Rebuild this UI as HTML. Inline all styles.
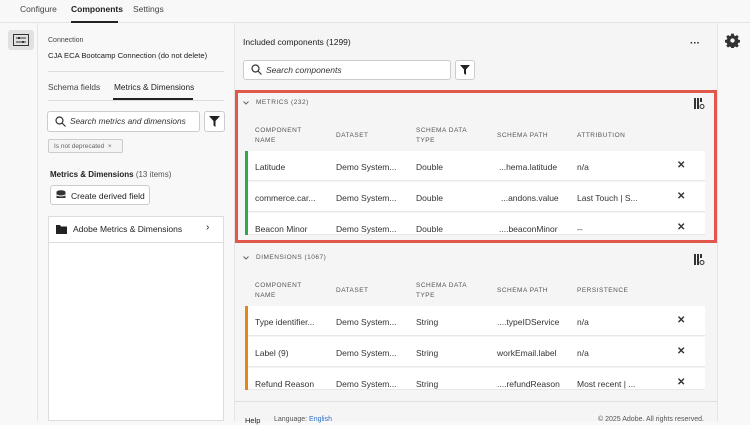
<!DOCTYPE html>
<html><head><meta charset="utf-8"><style>
*{box-sizing:border-box;margin:0;padding:0}
body{width:750px;height:421px;overflow:hidden;background:#f8f8f8;font-family:"Liberation Sans",sans-serif;color:#222;position:relative;font-size:9px}
.a{position:absolute}
.hdr{font-size:6.5px;color:#555;letter-spacing:.5px;line-height:10px}
.row{position:absolute;left:245px;width:460px;height:30px;background:#fff;border-bottom:1px solid #e8e8e8}
.row span{position:absolute;top:11px;font-size:8.5px;color:#333;white-space:nowrap}
.x{font-weight:bold;font-size:10px!important;top:9px!important}
</style></head><body>
<div class="a" style="left:0;top:0;width:750px;height:23px;background:#f8f8f8;border-bottom:1px solid #e4e4e4"></div>
<div class="a" style="left:20px;top:4px;font-size:8.5px;color:#444">Configure</div>
<div class="a" style="left:71px;top:4px;font-size:8.5px;font-weight:bold">Components</div>
<div class="a" style="left:71px;top:21px;width:47px;height:2px;background:#222"></div>
<div class="a" style="left:133px;top:4px;font-size:8.5px;color:#444">Settings</div>
<div class="a" style="left:8px;top:30px;width:26px;height:20px;background:#e1e1e1;border-radius:3px"></div>
<svg class="a" style="left:13px;top:34px" width="16" height="12"><rect x="0.5" y="0.5" width="15" height="11" fill="none" stroke="#333"/><line x1="3" y1="4" x2="13" y2="4" stroke="#333"/><line x1="3" y1="8" x2="13" y2="8" stroke="#333"/><rect x="5" y="3" width="2" height="2" fill="#333"/><rect x="9" y="7" width="2" height="2" fill="#333"/></svg>
<div class="a" style="left:37px;top:23px;width:1px;height:398px;background:#e4e4e4"></div>
<div class="a" style="left:234px;top:23px;width:1px;height:398px;background:#e4e4e4"></div>
<div class="a" style="left:48px;top:37px;font-size:7px;color:#444">Connection</div>
<div class="a" style="left:48px;top:51px;font-size:7.6px">CJA ECA Bootcamp Connection (do not delete)</div>
<div class="a" style="left:48px;top:71px;width:176px;height:1px;background:#ddd"></div>
<div class="a" style="left:48px;top:82px;font-size:8.3px;color:#444">Schema fields</div>
<div class="a" style="left:114px;top:82px;font-size:8.3px">Metrics &amp; Dimensions</div>
<div class="a" style="left:48px;top:100px;width:176px;height:1px;background:#ddd"></div>
<div class="a" style="left:113px;top:98px;width:80px;height:2px;background:#222"></div>
<div class="a" style="left:47px;top:111px;width:153px;height:21px;background:#fff;border:1px solid #ccc;border-radius:3px"></div>
<svg class="a" style="left:55px;top:116px" width="11" height="11"><circle cx="4.5" cy="4.5" r="3.5" fill="none" stroke="#333" stroke-width="1.2"/><line x1="7" y1="7" x2="10.5" y2="10.5" stroke="#333" stroke-width="1.2"/></svg>
<div class="a" style="left:70px;top:116px;font-size:8.3px;font-style:italic;color:#333">Search metrics and dimensions</div>
<div class="a" style="left:204px;top:111px;width:21px;height:21px;background:#fff;border:1px solid #ccc;border-radius:3px"></div>
<svg class="a" style="left:209px;top:116px" width="11" height="11"><path d="M0 0H11L6.5 5V11L4.5 9.5V5Z" fill="#222"/></svg>
<div class="a" style="left:48px;top:139px;width:75px;height:14px;border:1px solid #ccc;border-radius:2px;background:#f4f4f4;font-size:6.5px;color:#666;padding:3px 0 0 5px">Is not deprecated &nbsp;×</div>
<div class="a" style="left:50px;top:170px;font-size:8px;font-weight:bold">Metrics &amp; Dimensions <span style="font-weight:normal;color:#555">(13 items)</span></div>
<div class="a" style="left:50px;top:185px;width:100px;height:20px;background:#fff;border:1px solid #ccc;border-radius:3px;font-size:8.5px;padding:5px 0 0 20px">Create derived field</div>
<svg class="a" style="left:56px;top:190px" width="10" height="10"><ellipse cx="5" cy="2" rx="4.5" ry="1.8" fill="#333"/><rect x="0.5" y="2" width="9" height="6" fill="#333"/><path d="M0.5 5Q5 7 9.5 5" stroke="#fff" fill="none"/></svg>
<div class="a" style="left:48px;top:216px;width:176px;height:205px;background:#fff;border:1px solid #ddd"></div>
<div class="a" style="left:48px;top:242px;width:176px;height:1px;background:#ddd"></div>
<svg class="a" style="left:56px;top:225px" width="11" height="9"><path d="M0 0H4L5 1.5H11V9H0Z" fill="#222"/></svg>
<div class="a" style="left:73px;top:224px;font-size:8.5px">Adobe Metrics &amp; Dimensions</div>
<div class="a" style="left:206px;top:222px;font-size:10px">›</div>
<div class="a" style="left:235px;top:23px;width:482px;height:398px;background:#f5f5f5"></div>
<div class="a" style="left:717px;top:23px;width:1px;height:398px;background:#e4e4e4"></div>
<div class="a" style="left:243px;top:37px;font-size:8.5px">Included components (1299)</div>
<div class="a" style="left:690px;top:38px;font-size:10px;font-weight:bold">···</div>
<svg class="a" style="left:725px;top:33px" width="15" height="15" viewBox="0 0 24 24"><path fill="#333" d="M10 1h4l.6 3 2 .9 2.6-1.7 2.8 2.8-1.7 2.6.9 2 3 .6v4l-3 .6-.9 2 1.7 2.6-2.8 2.8-2.6-1.7-2 .9-.6 3h-4l-.6-3-2-.9-2.6 1.7-2.8-2.8 1.7-2.6-.9-2-3-.6v-4l3-.6.9-2-1.7-2.6 2.8-2.8 2.6 1.7 2-.9z"/><circle cx="12" cy="12" r="3.5" fill="#f8f8f8"/></svg>
<div class="a" style="left:243px;top:60px;width:208px;height:20px;background:#fff;border:1px solid #ccc;border-radius:3px"></div>
<svg class="a" style="left:251px;top:64px" width="11" height="11"><circle cx="4.5" cy="4.5" r="3.5" fill="none" stroke="#333" stroke-width="1.2"/><line x1="7" y1="7" x2="10.5" y2="10.5" stroke="#333" stroke-width="1.2"/></svg>
<div class="a" style="left:266px;top:65px;font-size:8.5px;font-style:italic;color:#333">Search components</div>
<div class="a" style="left:455px;top:60px;width:20px;height:20px;background:#fff;border:1px solid #ccc;border-radius:3px"></div>
<svg class="a" style="left:460px;top:65px" width="10" height="10"><path d="M0 0H10L6 4.5V10L4 8.5V4.5Z" fill="#222"/></svg>
<svg class="a" style="left:243px;top:101px" width="6" height="4"><path d="M0.5 0.5L3 3L5.5 0.5" fill="none" stroke="#666"/></svg>
<div class="a hdr" style="left:256px;top:98px;color:#555">METRICS (232)</div>
<svg class="a" style="left:694px;top:98px" width="11" height="12"><rect x="0" y="0" width="2" height="11" fill="#333"/><rect x="3" y="0" width="2" height="11" fill="#333"/><rect x="6" y="0" width="2" height="4" fill="#333"/><circle cx="8" cy="8.5" r="2" fill="none" stroke="#333"/></svg>
<div class="a hdr" style="left:255px;top:126px">COMPONENT<br>NAME</div>
<div class="a hdr" style="left:336px;top:131px">DATASET</div>
<div class="a hdr" style="left:416px;top:126px">SCHEMA DATA<br>TYPE</div>
<div class="a hdr" style="left:497px;top:131px">SCHEMA PATH</div>
<div class="a hdr" style="left:577px;top:131px">ATTRIBUTION</div>
<div class="row" style="top:151px"><span style="left:10px">Latitude</span><span style="left:91px">Demo System...</span><span style="left:171px">Double</span><span style="left:254px">...hema.latitude</span><span style="left:332px">n/a</span><span class="x" style="left:432px">✕</span></div>
<div class="row" style="top:182px"><span style="left:10px">commerce.car...</span><span style="left:91px">Demo System...</span><span style="left:171px">Double</span><span style="left:256px">...andons.value</span><span style="left:332px">Last Touch | S...</span><span class="x" style="left:432px">✕</span></div>
<div class="row" style="top:213px;height:22px"><span style="left:10px">Beacon Minor</span><span style="left:91px">Demo System...</span><span style="left:171px">Double</span><span style="left:254px">....beaconMinor</span><span style="left:332px">--</span><span class="x" style="left:432px">✕</span></div>
<div class="a" style="left:245px;top:151px;width:3px;height:84px;background:#2fa847"></div>
<div class="a" style="left:235px;top:90px;width:482px;height:153px;border:3px solid #e2574c"></div>
<svg class="a" style="left:243px;top:256px" width="6" height="4"><path d="M0.5 0.5L3 3L5.5 0.5" fill="none" stroke="#666"/></svg>
<div class="a hdr" style="left:256px;top:253px">DIMENSIONS (1067)</div>
<svg class="a" style="left:694px;top:254px" width="11" height="12"><rect x="0" y="0" width="2" height="11" fill="#333"/><rect x="3" y="0" width="2" height="11" fill="#333"/><rect x="6" y="0" width="2" height="4" fill="#333"/><circle cx="8" cy="8.5" r="2" fill="none" stroke="#333"/></svg>
<div class="a hdr" style="left:255px;top:281px">COMPONENT<br>NAME</div>
<div class="a hdr" style="left:336px;top:286px">DATASET</div>
<div class="a hdr" style="left:416px;top:281px">SCHEMA DATA<br>TYPE</div>
<div class="a hdr" style="left:497px;top:286px">SCHEMA PATH</div>
<div class="a hdr" style="left:577px;top:286px">PERSISTENCE</div>
<div class="row" style="top:306px"><span style="left:10px">Type identifier...</span><span style="left:91px">Demo System...</span><span style="left:171px">String</span><span style="left:252px">....typeIDService</span><span style="left:332px">n/a</span><span class="x" style="left:432px">✕</span></div>
<div class="row" style="top:337px"><span style="left:10px">Label (9)</span><span style="left:91px">Demo System...</span><span style="left:171px">String</span><span style="left:252px">workEmail.label</span><span style="left:332px">n/a</span><span class="x" style="left:432px">✕</span></div>
<div class="row" style="top:368px;height:22px"><span style="left:10px">Refund Reason</span><span style="left:91px">Demo System...</span><span style="left:171px">String</span><span style="left:252px">....refundReason</span><span style="left:332px">Most recent | ...</span><span class="x" style="left:432px">✕</span></div>
<div class="a" style="left:245px;top:306px;width:3px;height:84px;background:#e68619"></div>
<div class="a" style="left:235px;top:401px;width:482px;height:1px;background:#e0e0e0"></div>
<div class="a" style="left:245px;top:416px;font-size:7.5px">Help</div>
<div class="a" style="left:274px;top:416px;font-size:7px;color:#555">Language: <span style="color:#2d6fc8">English</span></div>
<div class="a" style="left:598px;top:416px;font-size:7px;color:#555">© 2025 Adobe. All rights reserved.</div>
</body></html>
